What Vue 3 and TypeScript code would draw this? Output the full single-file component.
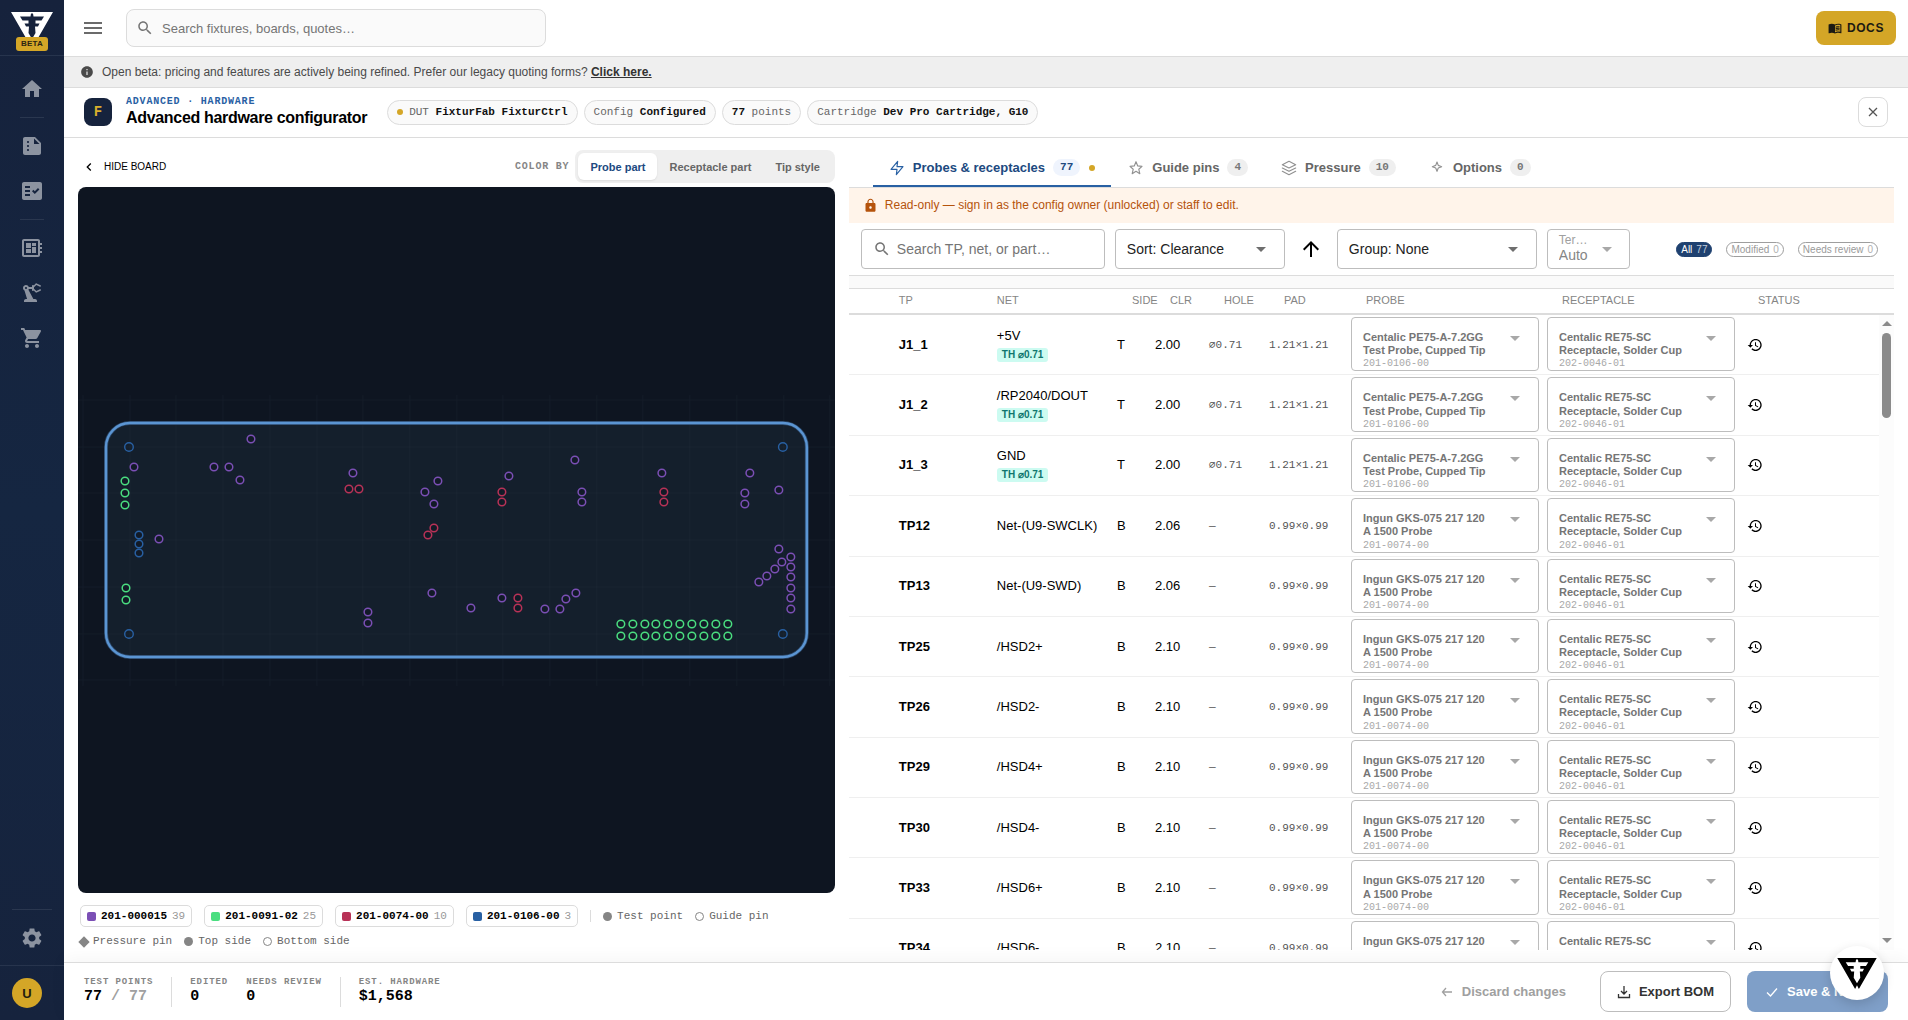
<script setup lang="ts">
import { ref } from 'vue'

interface Dot { x: number; y: number }
interface DotGroup { part: string; color: string; count: number; dots: Dot[] }
interface Row { tp: string; net: string; hole?: string; side: string; clr: string; pad: string; probe: string; part: string }

const pts = (flat: number[]): Dot[] => {
  const out: Dot[] = []
  for (let i = 0; i < flat.length; i += 2) out.push({ x: flat[i], y: flat[i + 1] })
  return out
}

const headerXs = [543, 555, 567, 578, 590, 602, 614, 626, 638, 650]

const groups: DotGroup[] = [
  {
    part: '201-000015', color: '#7b4fb5', count: 39,
    dots: pts([
      56, 280, 81, 352, 173, 252, 136, 280, 151, 280, 162, 293, 275, 286, 360, 294, 347, 305, 356, 317,
      354, 406, 290, 425, 290, 436, 393, 421, 431, 289, 497, 273, 504, 305, 504, 315, 584, 286, 672, 286,
      667, 306, 667, 317, 701, 303, 701, 362, 713, 370, 713, 380, 713, 390, 713, 401, 713, 411, 713, 422,
      704, 375, 697, 382, 689, 389, 681, 395, 424, 411, 467, 422, 482, 422, 488, 412, 498, 406,
    ]),
  },
  {
    part: '201-0091-02', color: '#4ade80', count: 25,
    dots: [
      ...pts([47, 294, 47, 306, 47, 318, 48, 401, 48, 413]),
      ...headerXs.map((x) => ({ x, y: 437 })),
      ...headerXs.map((x) => ({ x, y: 449 })),
    ],
  },
  {
    part: '201-0074-00', color: '#b83257', count: 10,
    dots: pts([271, 302, 281, 302, 356, 341, 350, 348, 424, 305, 424, 315, 586, 305, 586, 315, 440, 411, 440, 421]),
  },
  { part: '201-0106-00', color: '#2860a3', count: 3, dots: pts([61, 348, 61, 357, 61, 366]) },
]

const guidePins = pts([51, 260, 51, 447, 705, 260, 705, 447])
const gridX = Array.from({ length: 17 }, (_, i) => Math.round(5 + i * 46.7))
const gridY = Array.from({ length: 7 }, (_, i) => Math.round(213 + i * 46.7))

const centalic = 'Centalic PE75-A-7.2GG Test Probe, Cupped Tip'
const ingun = 'Ingun GKS-075 217 120 A 1500 Probe'
const th = (tp: string, net: string): Row => ({ tp, net, hole: '⌀0.71', side: 'T', clr: '2.00', pad: '1.21×1.21', probe: centalic, part: '201-0106-00' })
const smd = (tp: string, net: string, clr: string): Row => ({ tp, net, side: 'B', clr, pad: '0.99×0.99', probe: ingun, part: '201-0074-00' })

const rows: Row[] = [
  th('J1_1', '+5V'),
  th('J1_2', '/RP2040/DOUT'),
  th('J1_3', 'GND'),
  smd('TP12', 'Net-(U9-SWCLK)', '2.06'),
  smd('TP13', 'Net-(U9-SWD)', '2.06'),
  smd('TP25', '/HSD2+', '2.10'),
  smd('TP26', '/HSD2-', '2.10'),
  smd('TP29', '/HSD4+', '2.10'),
  smd('TP30', '/HSD4-', '2.10'),
  smd('TP33', '/HSD6+', '2.10'),
  smd('TP34', '/HSD6-', '2.10'),
]

const colorModes = ['Probe part', 'Receptacle part', 'Tip style']
const colorMode = ref('Probe part')
const tabs = [
  { id: 'probes', label: 'Probes & receptacles', count: 77 },
  { id: 'guide', label: 'Guide pins', count: 4 },
  { id: 'pressure', label: 'Pressure', count: 10 },
  { id: 'options', label: 'Options', count: 0 },
]
const tab = ref('probes')
const filters = [
  { label: 'All', count: 77 },
  { label: 'Modified', count: 0 },
  { label: 'Needs review', count: 0 },
]
const filter = ref('All')

const nav = {
  home: 'M10 20v-6h4v6h5v-8h3L12 3 2 12h3v8z',
  quotes: 'M15 3H5c-1.1 0-1.99.9-1.99 2L3 19c0 1.1.89 2 1.99 2H19c1.1 0 2-.9 2-2V9l-6-6zM8 17c-.55 0-1-.45-1-1s.45-1 1-1 1 .45 1 1-.45 1-1 1zm0-4c-.55 0-1-.45-1-1s.45-1 1-1 1 .45 1 1-.45 1-1 1zm0-4c-.55 0-1-.45-1-1s.45-1 1-1 1 .45 1 1-.45 1-1 1zm6 1V4.5l5.500 5.500H14z',
  orders: 'M20 3H4c-1.100 0-2 .9-2 2v14c0 1.100.9 2 2 2h16c1.100 0 2-.9 2-2V5c0-1.100-.9-2-2-2zM10 17H5v-2h5v2zm0-4H5v-2h5v2zm0-4H5V7h5v2zm4.820 6L12 12.160l1.410-1.410 1.410 1.420L17.990 9l1.420 1.420L14.820 15z',
  boards: 'M22 9V7h-2V5c0-1.100-.9-2-2-2H4c-1.100 0-2 .9-2 2v14c0 1.100.9 2 2 2h14c1.100 0 2-.9 2-2v-2h2v-2h-2v-2h2v-2h-2V9h2zm-4 10H4V5h14v14zM6 13h5v4H6zm6-6h4v3h-4zM6 7h5v5H6zm6 4h4v6h-4z',
  fixtures: 'M19.930 8.350l-3.600 1.680L14 7.700V6.300l2.330-2.330 3.600 1.680c.38.18.82.01 1-.36.18-.38.01-.82-.36-1l-3.920-1.830c-.38-.18-.83-.1-1.130.2L13.780 4.400c-.18-.24-.46-.4-.78-.4-.55 0-1 .45-1 1v1H8.820C8.400 4.840 7.300 4 6 4 4.340 4 3 5.340 3 7c0 1.100.6 2.050 1.480 2.580L7.080 18H6c-1.100 0-2 .9-2 2v1h13v-1c0-1.100-.9-2-2-2h-1.620L8.410 8.770c.17-.24.31-.49.41-.77H12v1c0 .55.45 1 1 1 .32 0 .6-.16.78-.4l1.740 1.740c.3.3.75.38 1.130.2l3.920-1.830c.38-.18.54-.62.36-1-.18-.37-.62-.54-1-.36zM6 8c-.55 0-1-.45-1-1s.45-1 1-1 1 .45 1 1-.45 1-1 1z',
  cart: 'M7 18c-1.100 0-1.990.9-1.990 2S5.900 22 7 22s2-.9 2-2-.9-2-2-2zM1 2v2h2l3.600 7.590-1.350 2.450c-.16.28-.25.61-.25.96 0 1.100.9 2 2 2h12v-2H7.420c-.14 0-.25-.11-.25-.25l.03-.12.9-1.630h7.450c.75 0 1.410-.41 1.750-1.030l3.580-6.490c.08-.14.12-.31.12-.48 0-.55-.45-1-1-1H5.210l-.94-2H1zm16 16c-1.100 0-1.990.9-1.990 2s.89 2 1.990 2 2-.9 2-2-.9-2-2-2z',
  settings: 'M19.140 12.940c.04-.3.06-.61.06-.94 0-.32-.02-.64-.07-.94l2.030-1.580c.18-.14.23-.41.12-.61l-1.920-3.320c-.12-.22-.37-.29-.59-.22l-2.390.96c-.5-.38-1.030-.7-1.620-.94l-.36-2.540c-.04-.24-.24-.41-.48-.41h-3.840c-.24 0-.43.17-.47.41l-.36 2.540c-.59.24-1.130.57-1.620.94l-2.390-.96c-.22-.08-.47 0-.59.22L2.740 8.870c-.12.21-.08.47.12.61l2.030 1.580c-.05.3-.09.63-.09.94s.02.64.07.94l-2.030 1.580c-.18.14-.23.41-.12.61l1.920 3.320c.12.22.37.29.59.22l2.390-.96c.5.38 1.030.7 1.620.94l.36 2.540c.05.24.24.41.48.41h3.840c.24 0 .44-.17.47-.41l.36-2.540c.59-.24 1.130-.56 1.620-.94l2.390.96c.22.08.47 0 .59-.22l1.920-3.320c.12-.22.07-.47-.12-.61l-2.010-1.580zM12 15.600c-1.980 0-3.600-1.620-3.600-3.600s1.620-3.600 3.600-3.600 3.600 1.620 3.600 3.600-1.620 3.600-3.600 3.600z',
}
const searchPath = 'M15.500 14h-.79l-.28-.27C15.410 12.590 16 11.110 16 9.500 16 5.910 13.090 3 9.500 3S3 5.910 3 9.500 5.910 16 9.500 16c1.610 0 3.090-.59 4.230-1.570l.27.28v.79l5 4.990L20.490 19l-4.990-5zm-6 0C7.010 14 5 11.990 5 9.500S7.010 5 9.500 5 14 7.010 14 9.500 11.990 14 9.500 14z'
const historyPath = 'M13 3c-4.970 0-9 4.030-9 9H1l3.890 3.890.07.14L9 12H6c0-3.870 3.130-7 7-7s7 3.130 7 7-3.130 7-7 7c-1.930 0-3.680-.79-4.940-2.060l-1.420 1.420C8.270 19.990 10.510 21 13 21c4.970 0 9-4.030 9-9s-4.030-9-9-9zm-1 5v5l4.280 2.540.72-1.210-3.500-2.080V8H12z'
const logoPath = 'M0 0H84L46 66L42 58L38 66ZM40 3L39 9H18L23 17H35V23H27L30 29H36L35 42L42 54L49 42L48 29H54L57 23H49V17H61L66 9H45L44 3Z'
</script>

<template>
  <div class="shell">
    <nav class="side" aria-label="Main">
      <div class="brand">
        <svg class="logo" viewBox="0 0 84 66" aria-hidden="true"><path :d="logoPath" fill="#fff" fill-rule="evenodd" /></svg>
        <span class="beta">BETA</span>
      </div>
      <div class="nav">
        <a href="#home" aria-label="Home"><svg viewBox="0 0 24 24"><path :d="nav.home" /></svg></a>
        <hr />
        <a href="#quotes" aria-label="Quotes"><svg viewBox="0 0 24 24"><path :d="nav.quotes" /></svg></a>
        <a href="#orders" aria-label="Orders"><svg viewBox="0 0 24 24"><path :d="nav.orders" /></svg></a>
        <hr />
        <a href="#boards" aria-label="Boards"><svg viewBox="0 0 24 24"><path :d="nav.boards" /></svg></a>
        <a href="#fixtures" aria-label="Fixtures"><svg viewBox="0 0 24 24"><path :d="nav.fixtures" /></svg></a>
        <a href="#cart" aria-label="Cart"><svg viewBox="0 0 24 24"><path :d="nav.cart" /></svg></a>
      </div>
      <div class="nav nav-bottom">
        <hr class="wide" />
        <a href="#settings" aria-label="Settings"><svg viewBox="0 0 24 24"><path :d="nav.settings" /></svg></a>
      </div>
      <div class="user"><button class="avatar" type="button">U</button></div>
    </nav>

    <div class="main">
      <header class="top">
        <button class="burger" type="button" aria-label="Toggle menu">
          <svg viewBox="0 0 24 24"><path d="M3 18h18v-2H3v2zm0-5h18v-2H3v2zm0-7v2h18V6H3z" /></svg>
        </button>
        <label class="global-search">
          <svg viewBox="0 0 24 24" aria-hidden="true"><path :d="searchPath" /></svg>
          <input type="text" placeholder="Search fixtures, boards, quotes…" aria-label="Search" />
        </label>
        <a class="docs" href="#docs">
          <svg viewBox="0 0 24 24" aria-hidden="true"><path fill-rule="evenodd" d="M21 5c-1.110-.35-2.330-.5-3.500-.5-1.950 0-4.050.4-5.500 1.500-1.450-1.100-3.550-1.500-5.500-1.500S2.450 4.900 1 6v14.650c0 .25.25.5.5.5.1 0 .15-.05.25-.05C3.100 20.450 5.050 20 6.500 20c1.950 0 4.050.4 5.500 1.500 1.350-.85 3.800-1.500 5.500-1.500 1.650 0 3.350.3 4.750 1.050.1.05.15.05.25.05.25 0 .5-.25.5-.5V6c-.6-.45-1.250-.75-2-1zm0 13.500c-1.100-.35-2.300-.5-3.500-.5-1.700 0-4.150.65-5.500 1.500V8c1.350-.85 3.800-1.500 5.500-1.500 1.200 0 2.400.15 3.500.5v11.500z" /><path d="M17.500 10.500c.88 0 1.730.09 2.500.26V9.240c-.79-.15-1.640-.24-2.500-.24-1.700 0-3.240.29-4.500.83v1.660c1.130-.64 2.700-.99 4.500-.99zM13 12.490v1.660c1.130-.64 2.700-.99 4.500-.99.88 0 1.730.09 2.500.26V11.900c-.79-.15-1.640-.24-2.500-.24-1.700 0-3.240.3-4.500.83zM17.500 14.330c-1.700 0-3.240.29-4.500.83v1.660c1.130-.64 2.700-.99 4.500-.99.88 0 1.730.09 2.500.26v-1.520c-.79-.16-1.640-.24-2.500-.24z" /></svg>
          DOCS
        </a>
      </header>

      <div class="beta-note">
        <svg viewBox="0 0 24 24" aria-hidden="true"><path d="M12 2C6.480 2 2 6.480 2 12s4.480 10 10 10 10-4.480 10-10S17.520 2 12 2zm1 15h-2v-6h2v6zm0-8h-2V7h2v2z" /></svg>
        <span>Open beta: pricing and features are actively being refined. Prefer our legacy quoting forms? <a href="#legacy">Click here.</a></span>
      </div>

      <div class="page-head">
        <span class="f-mark">F</span>
        <div class="titles">
          <div class="eyebrow">ADVANCED · HARDWARE</div>
          <h1>Advanced hardware configurator</h1>
        </div>
        <div class="chips">
          <span class="chip"><i class="dot"></i><span>DUT <b>FixturFab FixturCtrl</b></span></span>
          <span class="chip"><span>Config <b>Configured</b></span></span>
          <span class="chip"><span><b>77</b> points</span></span>
          <span class="chip"><span>Cartridge <b>Dev Pro Cartridge, G10</b></span></span>
        </div>
        <button class="close" type="button" aria-label="Close">
          <svg viewBox="0 0 14 14"><path d="M3 3l8 8M11 3l-8 8" /></svg>
        </button>
      </div>

      <div class="work">
        <section class="board-col">
          <div class="board-bar">
            <button class="hide" type="button">
              <svg viewBox="0 0 24 24" aria-hidden="true"><path d="M15.410 7.410L14 6l-6 6 6 6 1.410-1.410L10.830 12z" /></svg>
              HIDE BOARD
            </button>
            <span class="color-by">COLOR BY</span>
            <div class="seg">
              <button v-for="m in colorModes" :key="m" type="button" :class="{ on: m === colorMode }" @click="colorMode = m">{{ m }}</button>
            </div>
          </div>
          <div class="canvas">
            <svg viewBox="0 0 757 706" role="img" aria-label="Board map">
              <g stroke="#151d29" stroke-width="1">
                <line v-for="x in gridX" :key="'x' + x" :x1="x" :x2="x" y1="208" y2="499" />
                <line v-for="y in gridY" :key="'y' + y" x1="0" x2="757" :y1="y" :y2="y" />
              </g>
              <rect x="28" y="236" width="701" height="234" rx="24" fill="#141f2c" stroke="#2b4666" stroke-width="4" />
              <rect x="28" y="236" width="701" height="234" rx="24" fill="none" stroke="#5b95d3" stroke-width="2.400" />
              <g stroke="#fff" stroke-opacity=".03" stroke-width="1">
                <line v-for="x in gridX.slice(1, 16)" :key="'bx' + x" :x1="x" :x2="x" y1="238" y2="468" />
                <line v-for="y in gridY.slice(1, 6)" :key="'by' + y" x1="30" x2="727" :y1="y" :y2="y" />
              </g>
              <g v-for="g in groups" :key="g.part" fill="#0e1521" fill-opacity=".4" :stroke="g.color" stroke-width="1.500">
                <circle v-for="(d, i) in g.dots" :key="i" :cx="d.x" :cy="d.y" r="3.800" />
              </g>
              <g fill="none" stroke="#2860a3" stroke-width="1.400">
                <circle v-for="(d, i) in guidePins" :key="i" :cx="d.x" :cy="d.y" r="4.300" />
              </g>
            </svg>
          </div>
          <div class="legend">
            <span v-for="g in groups" :key="g.part" class="part">
              <i :style="{ background: g.color }"></i><b>{{ g.part }}</b><span>{{ g.count }}</span>
            </span>
            <span class="rule"></span>
            <span class="key"><i class="round"></i>Test point</span>
            <span class="key"><i class="ring"></i>Guide pin</span>
            <span class="key"><i class="diamond"></i>Pressure pin</span>
            <span class="key"><i class="round"></i>Top side</span>
            <span class="key"><i class="ring"></i>Bottom side</span>
          </div>
        </section>

        <section class="panel">
          <div class="tabs" role="tablist">
            <button v-for="t in tabs" :key="t.id" type="button" role="tab" class="tab" :class="{ on: t.id === tab }" :aria-selected="t.id === tab" @click="tab = t.id">
              <svg viewBox="0 0 24 24" aria-hidden="true">
                <polygon v-if="t.id === 'probes'" points="13 2 3 14 12 14 11 22 21 10 12 10" />
                <polygon v-else-if="t.id === 'guide'" points="12 2.500 14.600 8.900 21 9.500 16.200 13.900 17.700 20.500 12 17 6.300 20.500 7.800 13.900 3 9.500 9.400 8.900" />
                <template v-else-if="t.id === 'pressure'">
                  <polygon points="12 2 2 7 12 12 22 7" /><polyline points="2 17 12 22 22 17" /><polyline points="2 12 12 17 22 12" />
                </template>
                <path v-else d="M12 3l1.900 5.100L19 10l-5.100 1.900L12 17l-1.900-5.100L5 10l5.100-1.900z" />
              </svg>
              <span>{{ t.label }}</span>
              <span class="count">{{ t.count }}</span>
              <i v-if="t.id === 'probes'" class="dot"></i>
            </button>
          </div>

          <div class="readonly">
            <svg viewBox="0 0 24 24" aria-hidden="true"><path d="M18 8h-1V6c0-2.760-2.240-5-5-5S7 3.240 7 6v2H6c-1.100 0-2 .9-2 2v10c0 1.100.9 2 2 2h12c1.100 0 2-.9 2-2V10c0-1.100-.9-2-2-2zm-6 9c-1.100 0-2-.9-2-2s.9-2 2-2 2 .9 2 2-.9 2-2 2zm3.100-9H8.900V6c0-1.710 1.390-3.100 3.100-3.100 1.710 0 3.100 1.390 3.100 3.100v2z" /></svg>
            Read-only — sign in as the config owner (unlocked) or staff to edit.
          </div>

          <div class="tools">
            <label class="field find">
              <svg viewBox="0 0 24 24" aria-hidden="true"><path :d="searchPath" /></svg>
              <input type="text" placeholder="Search TP, net, or part…" aria-label="Search test points" />
            </label>
            <div class="field pick sort">
              <select aria-label="Sort"><option>Sort: Clearance</option></select>
              <span class="caret"></span>
            </div>
            <button class="dir" type="button" aria-label="Sort direction">
              <svg viewBox="0 0 24 24"><path d="M4 12l1.410 1.410L11 7.830V20h2V7.830l5.580 5.590L20 12l-8-8-8 8z" /></svg>
            </button>
            <div class="field pick group">
              <select aria-label="Group"><option>Group: None</option></select>
              <span class="caret"></span>
            </div>
            <div class="field pick term">
              <label for="term">Ter…</label>
              <select id="term" disabled><option>Auto</option></select>
              <span class="caret"></span>
            </div>
            <div class="filters">
              <button v-for="f in filters" :key="f.label" type="button" :class="{ on: f.label === filter }" @click="filter = f.label">
                {{ f.label }}<span>{{ f.count }}</span>
              </button>
            </div>
          </div>

          <div class="strip"></div>

          <div class="grid">
            <table>
              <colgroup>
                <col class="c-gap" /><col class="c-tp" /><col /><col class="c-side" /><col class="c-clr" /><col class="c-hole" /><col class="c-pad" /><col class="c-part" /><col class="c-part" /><col class="c-status" />
              </colgroup>
              <thead>
                <tr>
                  <td></td><th>TP</th><th>NET</th><th class="in">SIDE</th><th class="in">CLR</th><th class="in">HOLE</th><th class="in">PAD</th><th class="in">PROBE</th><th class="in">RECEPTACLE</th><th class="in">STATUS</th>
                </tr>
              </thead>
              <tbody>
                <tr v-for="r in rows" :key="r.tp">
                  <td></td>
                  <td class="tp">{{ r.tp }}</td>
                  <td><div>{{ r.net }}</div><span v-if="r.hole" class="tag">TH {{ r.hole }}</span></td>
                  <td>{{ r.side }}</td>
                  <td>{{ r.clr }}</td>
                  <td class="mono">{{ r.hole ?? '—' }}</td>
                  <td class="mono">{{ r.pad }}</td>
                  <td class="cell">
                    <button class="part-pick" type="button" disabled aria-haspopup="listbox">
                      <span class="txt"><b>{{ r.probe }}</b><small>{{ r.part }}</small></span><span class="caret"></span>
                    </button>
                  </td>
                  <td class="cell">
                    <button class="part-pick" type="button" disabled aria-haspopup="listbox">
                      <span class="txt"><b>Centalic RE75-SC Receptacle, Solder Cup</b><small>202-0046-01</small></span><span class="caret"></span>
                    </button>
                  </td>
                  <td><button class="hist" type="button" aria-label="History"><svg viewBox="0 0 24 24"><path :d="historyPath" /></svg></button></td>
                </tr>
              </tbody>
            </table>
            <div class="rail" aria-hidden="true">
              <div class="rail-head"></div>
              <div class="rail-body"><span class="up"></span><span class="thumb"></span><span class="down"></span></div>
            </div>
          </div>
        </section>
      </div>

      <footer class="foot">
        <div class="stat"><span>TEST POINTS</span><b>77 <em>/ 77</em></b></div>
        <span class="bar"></span>
        <div class="stat"><span>EDITED</span><b>0</b></div>
        <div class="stat"><span>NEEDS REVIEW</span><b>0</b></div>
        <span class="bar"></span>
        <div class="stat"><span>EST. HARDWARE</span><b>$1,568</b></div>
        <div class="actions">
          <button class="btn ghost" type="button" disabled>
            <svg viewBox="0 0 14 14" aria-hidden="true"><path d="M12 7H3M6 3L2.500 7 6 11" /></svg>Discard changes
          </button>
          <button class="btn line" type="button">
            <svg viewBox="0 0 14 14" aria-hidden="true"><path d="M7 1v8M4 6l3 3 3-3M1.500 9v3.500h11V9" /></svg>Export BOM
          </button>
          <button class="btn solid" type="button" disabled>
            <svg viewBox="0 0 14 14" aria-hidden="true"><path d="M2 7.500L5.500 11 12 3.500" /></svg>Save &amp; Next
          </button>
        </div>
      </footer>
    </div>

    <button class="fab" type="button" aria-label="Open assistant">
      <svg viewBox="0 0 84 66" aria-hidden="true"><path :d="logoPath" fill="#000" fill-rule="evenodd" /></svg>
    </button>
  </div>
</template>

<style>
body { margin: 0; background: #fff; }
</style>

<style scoped>
* { box-sizing: border-box; }
.shell {
  display: flex; height: 100vh; position: relative; overflow: hidden;
  font-family: "Liberation Sans", Arial, sans-serif; font-size: 13px; color: #000;
}
button, input, select { font: inherit; color: inherit; margin: 0; padding: 0; border: 0; background: none; }
input:focus { outline: none; }
svg { display: block; flex: none; }

.side { width: 64px; flex: none; display: flex; flex-direction: column; background: linear-gradient(#16223c, #152641 50%, #16233d); }
.brand { height: 56px; border-bottom: 1px solid #27344d; display: flex; flex-direction: column; align-items: center; padding-top: 12px; }
.logo { width: 42px; height: 33px; }
.beta { height: 14px; line-height: 14px; padding: 0 5px; margin-top: -8px; border-radius: 3px; background: #d4a627; color: #2a2413; font-size: 8px; font-weight: 700; letter-spacing: .03em; position: relative; }
.nav { padding-top: 10px; display: flex; flex-direction: column; }
.nav a { height: 45px; display: flex; align-items: center; justify-content: center; }
.nav svg { width: 24px; height: 24px; fill: #8c93a0; fill-rule: evenodd; }
.nav hr { width: 24px; height: 1px; border: 0; margin: 6px auto 5px; background: #2a374f; }
.nav hr.wide { width: 40px; }
.nav-bottom { margin-top: auto; padding: 0 0 5px; }
.user { border-top: 1px solid #27344d; padding: 12px; }
.avatar { display: block; width: 30px; height: 30px; border-radius: 50%; background: #d4a627; color: #23200f; font-weight: 700; font-size: 13px; }

.main { flex: 1; min-width: 0; display: flex; flex-direction: column; }
.top { height: 57px; flex: none; display: flex; align-items: center; padding: 0 12px 0 17px; border-bottom: 1px solid #dcdcdc; }
.burger svg { width: 24px; height: 24px; fill: #6b6b6b; }
.global-search { width: 420px; height: 38px; margin-left: 21px; padding-left: 9px; display: flex; align-items: center; gap: 8px; border: 1px solid #dcdcdc; border-radius: 8px; background: #fafafa; }
.global-search svg { width: 18px; height: 18px; fill: #757575; }
.global-search input { flex: 1; min-width: 0; font-size: 13px; }
input::placeholder { color: #757575; opacity: 1; }
.docs { margin-left: auto; height: 34px; padding: 0 12px; display: flex; align-items: center; gap: 5px; border-radius: 8px; background: #d4a627; color: #1c1a12; font-size: 12px; font-weight: 700; letter-spacing: .05em; text-decoration: none; }
.docs svg { width: 14px; height: 14px; fill: #1c1a12; }

.beta-note { height: 31px; flex: none; display: flex; align-items: center; gap: 8px; padding: 0 16px; background: #efefef; border-bottom: 1px solid #dcdcdc; color: #4a4a4a; font-size: 12px; }
.beta-note svg { width: 14px; height: 14px; fill: #4a4a4a; }
.beta-note a { color: #333; font-weight: 700; }

.page-head { height: 50px; flex: none; display: flex; align-items: center; padding: 0 20px 1px; border-bottom: 1px solid #dcdcdc; }
.f-mark { width: 28px; height: 28px; text-align: center; border-radius: 8px; background: #16233d; color: #d9ae2d; font: 700 14px/28px "Liberation Mono", monospace; }
.titles { margin-left: 14px; }
.eyebrow { font: 700 10px/12px "Liberation Mono", monospace; letter-spacing: .08em; color: #2860a3; }
h1 { margin: 0; font-size: 16px; line-height: 20px; font-weight: 700; letter-spacing: -.02em; white-space: nowrap; }
.chips { display: flex; gap: 6px; margin-left: 20px; }
.chip { height: 25px; padding: 0 9px 1px; display: flex; align-items: center; gap: 6px; border: 1px solid #dcdcdc; border-radius: 13px; background: #fafafa; color: #666; font: 11px/14px "Liberation Mono", monospace; white-space: pre; }
.chip b { color: #111; }
.dot { width: 6px; height: 6px; border-radius: 50%; background: #d4a627; }
.close { margin-left: auto; width: 30px; height: 30px; display: grid; place-items: center; border: 1px solid #dcdcdc; border-radius: 8px; }
.close svg { width: 14px; height: 14px; stroke: #555; fill: none; stroke-width: 1.3; }

.work { flex: 1; min-height: 0; display: grid; grid-template-columns: 42fr 58fr; gap: 14px; padding: 12px 14px; }
.board-col, .panel { min-width: 0; min-height: 0; display: flex; flex-direction: column; }
.board-bar { height: 33px; flex: none; display: flex; align-items: center; margin-bottom: 4px; }
.hide { display: flex; align-items: center; gap: 7px; padding-left: 3px; font-size: 10px; }
.hide svg { width: 16px; height: 16px; }
.color-by { margin-left: auto; margin-right: 6px; font: 700 10px/14px "Liberation Mono", monospace; letter-spacing: .08em; color: #858585; }
.seg { display: flex; height: 33px; padding: 3px; border-radius: 8px; background: #efefef; }
.seg button { padding: 0 12px; border-radius: 6px; font-size: 11px; font-weight: 700; color: #666; }
.seg .on { background: #fff; color: #20497f; box-shadow: 0 1px 2px rgba(0, 0, 0, .08); }
.canvas { flex: 1; min-height: 0; border-radius: 8px; overflow: hidden; background: #0e1521; }
.canvas svg { width: 100%; height: 100%; }
.legend { flex: none; display: flex; flex-wrap: wrap; align-items: center; gap: 8px 12px; padding: 12px 2px 2px; font: 11px/13px "Liberation Mono", monospace; color: #666; }
.part { height: 22px; padding: 0 6px; display: flex; align-items: center; gap: 5px; border: 1px solid #dcdcdc; border-radius: 5px; color: #999; }
.part b { color: #000; }
.part i { width: 9px; height: 9px; border-radius: 2px; }
.rule { width: 1px; height: 12px; background: #dcdcdc; }
.key { display: flex; align-items: center; gap: 5px; }
.key i { width: 9px; height: 9px; background: #858585; }
.key .round { border-radius: 50%; }
.key .ring { border-radius: 50%; background: none; border: 1px solid #858585; }
.key .diamond { width: 8px; height: 8px; transform: rotate(45deg); }

.tabs { height: 38px; flex: none; display: flex; gap: 1px; padding-left: 24px; border-bottom: 1px solid #dcdcdc; }
.tab { display: flex; align-items: center; gap: 8px; padding: 0 16px; border-bottom: 2px solid transparent; font-weight: 700; color: #666; white-space: nowrap; }
.tab svg { width: 16px; height: 16px; fill: none; stroke: #909090; stroke-width: 1.7; stroke-linejoin: round; stroke-linecap: round; }
.tab.on { color: #20497f; border-color: #2860a3; }
.tab.on svg { stroke: #2860a3; }
.tab .dot { margin-left: 1px; }
.count { height: 17px; padding: 0 7px; border-radius: 9px; background: #efefef; color: #777; font: 700 11px/17px "Liberation Mono", monospace; }
.tab.on .count { background: #eff4fd; color: #20497f; }

.readonly { height: 35px; flex: none; display: flex; align-items: center; gap: 7px; padding: 0 14px 1px; background: #fff4ea; color: #b5530c; font-size: 12px; }
.readonly svg { width: 15px; height: 15px; fill: #b5530c; }

.tools { height: 53px; flex: none; display: flex; align-items: center; gap: 10px; padding: 0 16px 0 12px; border-bottom: 1px solid #dcdcdc; }
.field { height: 40px; display: flex; align-items: center; border: 1px solid #bdbdbd; border-radius: 4px; position: relative; font-size: 14px; color: #222; }
.find { width: 244px; gap: 6px; padding-left: 11px; }
.find svg { width: 18px; height: 18px; fill: #757575; }
.find input { flex: 1; min-width: 0; }
.sort { width: 170px; }
.group { width: 200px; }
.term { width: 83px; }
.pick select { width: 100%; height: 38px; padding: 0 32px 0 11px; appearance: none; }
.caret { width: 0; height: 0; border: 5px solid transparent; border-top-color: #6e6e6e; border-bottom: 0; }
.pick .caret { position: absolute; right: 18px; top: 17px; pointer-events: none; }
.term label { position: absolute; left: 11px; top: 3px; font-size: 12px; line-height: 14px; color: #a0a0a0; }
.term select { padding: 12px 24px 0 11px; color: #858585; opacity: 1; }
.term .caret { right: 17px; }
.term .caret, .part-pick .caret { border-top-color: #a8a8a8; }
.dir { width: 32px; height: 32px; display: grid; place-items: center; }
.dir svg { width: 24px; height: 24px; }
.filters { margin-left: auto; display: flex; gap: 14px; }
.filters button { height: 15px; padding: 0 4px; display: flex; align-items: center; gap: 4px; border: 1px solid #9e9e9e; border-radius: 8px; font-size: 10px; color: #9a9a9a; white-space: nowrap; }
.filters button span { color: #b0b0b0; }
.filters .on { background: #1f4170; border-color: #1f4170; color: #fff; }
.filters .on span { color: #c3cedd; }

.strip { height: 13px; flex: none; background: #fafafa; border-bottom: 1px solid #dcdcdc; }

.grid { flex: 1; min-height: 0; overflow: hidden; display: flex; align-items: stretch; }
table { flex: 1; width: 100%; min-width: 0; align-self: flex-start; table-layout: fixed; border-collapse: separate; border-spacing: 0; }
.c-gap { width: 50px; }
.c-tp { width: 98px; }
.c-side { width: 38px; }
.c-clr { width: 54px; }
.c-hole { width: 60px; }
.c-pad { width: 82px; }
.c-part { width: 196px; }
.c-status { width: 136px; }
thead tr { height: 26px; }
th { padding: 0 0 2px; text-align: left; font-size: 11px; font-weight: 400; color: #858585; white-space: nowrap; }
th.in { padding-left: 15px; }
thead th, thead td { border-bottom: 2px solid #dcdcdc; }
tbody td { padding: 0; border-bottom: 1px solid #efefef; vertical-align: middle; line-height: 16px; }
.tp { font-weight: 700; }
.tag { display: inline-block; height: 14px; padding: 0 5px; border-radius: 3px; background: #ccfbf1; color: #0f766e; font-size: 10px; line-height: 13px; font-weight: 700; margin-top: 4px; }
.mono { font: 11px/16px "Liberation Mono", monospace; color: #555; }
tbody td.cell { padding: 2px 0 3px; }
.part-pick { width: 188px; padding: 13px 18px 0 11px; display: flex; justify-content: space-between; align-items: flex-start; border: 1px solid #bdbdbd; border-radius: 4px; text-align: left; color: #757575; }
.part-pick .caret { margin-top: 5px; }
.txt { width: 128px; }
.txt b { display: block; font-size: 11px; line-height: 1.2; }
.txt small { display: block; font: 10px/13px "Liberation Mono", monospace; color: #a8a8a8; }
.hist { display: block; padding-left: 4px; }
.hist svg { width: 16px; height: 16px; }
.rail { width: 15px; flex: none; display: flex; flex-direction: column; }
.rail-head { height: 26px; border-bottom: 2px solid #dcdcdc; }
.rail-body { flex: 1; display: flex; flex-direction: column; align-items: center; background: #fcfcfc; padding: 6px 0 7px; }
.up { border: 5px solid transparent; border-top: 0; border-bottom-color: #8b8b8b; }
.down { margin-top: auto; border: 5px solid transparent; border-bottom: 0; border-top-color: #8b8b8b; }
.thumb { width: 9px; height: 85px; margin-top: 7px; border-radius: 5px; background: #8b8b8b; }

.foot { height: 58px; flex: none; display: flex; align-items: center; gap: 18px; padding: 0 20px; border-top: 1px solid #dcdcdc; background: #fff; box-shadow: 0 -4px 16px rgba(0, 0, 0, .04); position: relative; }
.stat { display: flex; flex-direction: column; font-family: "Liberation Mono", monospace; }
.stat span { font-size: 9px; line-height: 12px; font-weight: 700; letter-spacing: .1em; color: #858585; }
.stat b { font-size: 15px; line-height: 18px; padding-bottom: 2px; }
.stat em { font-style: normal; color: #a0a0a0; }
.bar { width: 1px; height: 30px; background: #dcdcdc; }
.actions { margin-left: auto; display: flex; gap: 16px; }
.btn { height: 41px; padding: 0 17px; display: flex; align-items: center; gap: 8px; border: 1px solid transparent; border-radius: 8px; font-weight: 700; white-space: nowrap; }
.btn svg { width: 14px; height: 14px; fill: none; stroke: currentColor; stroke-width: 1.3; }
.ghost { color: #a0a0a0; }
.line { border-color: #bdbdbd; color: #333; padding: 0 16px; }
.solid { width: 141px; background: #7f9fc8; color: #fff; }

.fab { position: absolute; right: 24px; bottom: 20px; width: 54px; height: 54px; border-radius: 50%; background: #fff; display: grid; place-items: center; box-shadow: 0 4px 12px rgba(0, 0, 0, .15); }
.fab svg { width: 40px; height: 31px; }
</style>
